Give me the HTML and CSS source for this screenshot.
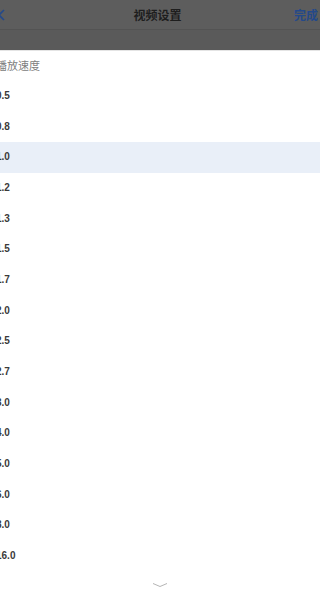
FILE: index.html
```html
<!DOCTYPE html>
<html lang="zh">
  <head>
    <meta charset="UTF-8" />
    <meta name="viewport" content="width=device-width, initial-scale=1.0" />
    <link rel="stylesheet" href="styles.css">
    <title>视频设置</title>
  </head>
  <body>
    <div class="page">
      <header class="header">
        <div class="topbar">
          <span class="back">
            <svg width="9" height="12" viewBox="0 0 9 12">
              <path d="M7 1 L2 6 L7 11" fill="none" stroke="#24498a" stroke-width="1.6" />
            </svg>
          </span>
          <span class="title">视频设置</span>
          <span class="done">完成</span>
        </div>
        <div class="subbar"></div>
      </header>

      <div class="section-label">播放速度</div>
      <ul class="speeds">
        <li>0.5</li>
        <li>0.8</li>
        <li class="active">1.0</li>
        <li>1.2</li>
        <li>1.3</li>
        <li>1.5</li>
        <li>1.7</li>
        <li>2.0</li>
        <li>2.5</li>
        <li>2.7</li>
        <li>3.0</li>
        <li>4.0</li>
        <li>5.0</li>
        <li>6.0</li>
        <li>8.0</li>
        <li>16.0</li>
      </ul>

      <div class="more">
        <svg width="16" height="6" viewBox="0 0 16 6">
          <path d="M1 1.5 L8 4.5 L15 1.5" fill="none" stroke="#b5b5b5" stroke-width="1" />
        </svg>
      </div>
    </div>
  </body>
</html>
```

FILE: styles.css
```css
body {
  margin: 0;
  overflow: hidden;
  background: #fff;
  font-family: "Liberation Sans", "Noto Sans CJK SC", sans-serif;
}

.page {
  margin: 0 -4px;
}

.header {
  background: #5d5d5d;
  border-bottom: 1px solid #e4e4e4;
}

.topbar {
  height: 29px;
  display: flex;
  align-items: center;
  justify-content: space-between;
  padding: 0 6px 0 1px;
  border-bottom: 1px solid #535353;
}

.back {
  display: flex;
  width: 26px;
}

.title {
  font-family: "Noto Sans CJK SC", sans-serif;
  font-size: 12px;
  font-weight: 700;
  color: #1e1e1e;
}

.done {
  width: 26px;
  font-family: "Noto Sans CJK SC", sans-serif;
  font-size: 12px;
  font-weight: 700;
  color: #24498a;
  text-align: right;
  white-space: nowrap;
}

.subbar {
  height: 20px;
  background: #5a5a5a;
}

.section-label {
  height: 30px;
  line-height: 28px;
  font-family: "Noto Sans CJK SC", sans-serif;
  font-size: 11px;
  color: #808080;
}

.speeds {
  list-style: none;
  margin: 0;
  padding: 0;
}

.speeds li {
  height: 30.67px;
  line-height: 30.67px;
  font-size: 10px;
  font-weight: 700;
  color: #3a3a3a;
}

.speeds li.active {
  background: #e9eff8;
}

.more {
  display: flex;
  justify-content: center;
  padding-top: 10px;
}
```
